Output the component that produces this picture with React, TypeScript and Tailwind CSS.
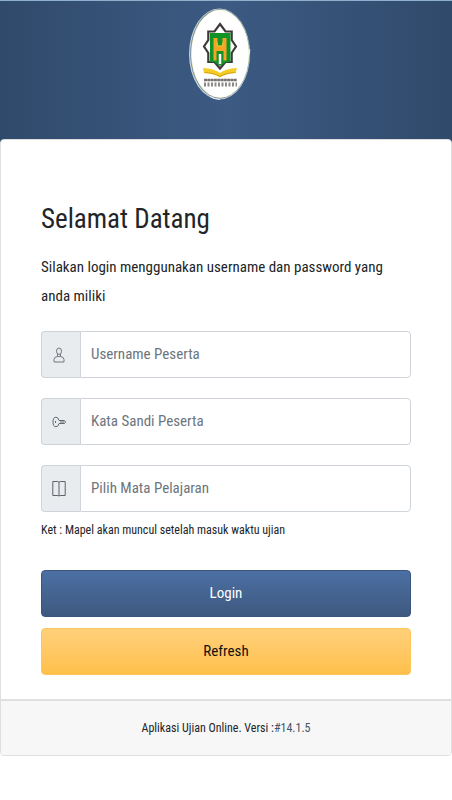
import { useState } from "react";
import type { FormEvent, ReactNode } from "react";

const SchoolLogo = () => (
  <svg
    viewBox="0 0 64 94"
    role="img"
    aria-label="Logo Purbalingga"
    className="h-[94px] w-16"
  >
    <ellipse cx="31.5" cy="46" rx="30.500" ry="45.500" fill="#c5d2dc" />
    <ellipse cx="31.8" cy="45.8" rx="29.600" ry="44.600" fill="#5d7896" />
    <ellipse cx="32" cy="45.8" rx="29.200" ry="44.200" fill="#d5d89c" />
    <ellipse cx="32.2" cy="45.8" rx="28.700" ry="43.700" fill="#fff" />
    <path
      d="M61.500 41q.5 3-.5 6M22 88.500q5 3 10 3"
      fill="none"
      stroke="#e4eaee"
      strokeWidth="1.2"
    />
    <path
      d="M32 16l5.500 7.500h6.200V32L48 38.500 43.700 45v9h-6.200L32 60.500 26.500 54h-6.200v-9L16 38.500l4.300-6.500v-8.500h6.200z"
      fill="#fff"
      stroke="#40393c"
      strokeWidth="2.2"
    />
    <path d="M22 25h20.500v29h-4L32 58l-6-4h-4z" fill="#119326" />
    <path d="M25.500 30h4v7.500h5V30h4v22.500h-3V43h-7v9.500h-3z" fill="#f6a428" />
    <path d="M28.500 34.500h1.500v3h4v-3h1.500v4h-7z" fill="#d8c32a" />
    <path d="M32 46v10" stroke="#fff" strokeWidth="2.500" />
    <path
      d="M15 60q11 .5 17 5 6-4.500 17-5l-1.500 5q-10 .5-15.500 4.500-5.500-4-16-4.500z"
      fill="#f5cb25"
    />
    <path
      d="M16.500 64.500q10 .5 15.500 4 5.500-3.500 15.500-4"
      fill="none"
      stroke="#c99b14"
      strokeWidth="0.8"
    />
    <path d="M16 72h33" stroke="#77726f" strokeWidth="2.500" strokeDasharray="3 .3" />
    <path d="M16 76.500h33" stroke="#8b8886" strokeWidth="4" strokeDasharray="2 1.500" />
  </svg>
);

const UserIcon = () => (
  <svg viewBox="0 0 12 16" className="h-4 w-3" fill="none" stroke="#73787e">
    <ellipse cx="6" cy="4.200" rx="2.500" ry="3.200" />
    <path d="M4.500 7v2.500Q1 10 1 12.500V15h10v-2.500q0-2.500-3.500-3V7" />
    <path d="M4.500 9.500h3" />
  </svg>
);

const KeyIcon = () => (
  <svg viewBox="0 0 14 12" className="h-3 w-3.5" fill="none" stroke="#646a71">
    <path d="M7 4.500Q6.200 1.200 4 1.200 1 1.200 1 6t3 4.800q2.200 0 3-3.300h5.500l1-1.500-1-1.500z" />
    <path d="M3.500 5v2M8 6h4" />
  </svg>
);

const BookIcon = () => (
  <svg viewBox="0 0 14 17" className="h-[17px] w-3.5" fill="none" stroke="#5d6268">
    <path d="M.8 15.500V1.500h5L7 2.300l1.200-.8h5v14h-5L7 16l-1.200-.5zM7 2v14" />
  </svg>
);

type FieldProps = {
  id: string;
  label: string;
  icon: ReactNode;
  children: ReactNode;
};

const Field = ({ id, label, icon, children }: FieldProps) => (
  <div className="flex h-[47px]">
    <label
      htmlFor={id}
      aria-label={label}
      className="flex w-[39px] shrink-0 items-center justify-center rounded-l border border-r-0 border-[#ced4da] bg-[#e9ecef] pr-1"
    >
      {icon}
    </label>
    {children}
  </div>
);

const controlClass =
  "w-full min-w-0 flex-1 appearance-none rounded-r border border-[#ced4da] bg-white px-2.5 text-[15px] text-[#6c757d] placeholder:text-[#6c757d] focus:border-[#3c5a86] focus:outline-none";

const App = () => {
  const [username, setUsername] = useState("");
  const [password, setPassword] = useState("");

  const handleSubmit = (event: FormEvent) => {
    event.preventDefault();
  };

  const handleRefresh = () => {
    setUsername("");
    setPassword("");
  };

  return (
    <div className="min-h-screen bg-white font-['Roboto_Condensed',Roboto,sans-serif] text-[#212529]">
      <header className="flex h-[226px] justify-center border-t border-[#8fb0cc] bg-[linear-gradient(90deg,#304a6b,#3c5a82_50%,#304a6b)] pt-[7px] pr-3">
        <SchoolLogo />
      </header>

      <main className="relative -mt-[87px]">
        <div className="overflow-hidden rounded border border-[#dfdfdf] bg-white">
          <form onSubmit={handleSubmit} className="px-10 pt-[59px] pb-6">
            <h1 className="text-[27px] leading-10">Selamat Datang</h1>
            <p className="mt-3.5 mb-5 text-[15px] leading-[29px]">
              Silakan login menggunakan username dan password yang anda miliki
            </p>

            <div className="flex flex-col gap-5">
              <Field id="username" label="Username" icon={<UserIcon />}>
                <input
                  id="username"
                  type="text"
                  placeholder="Username Peserta"
                  value={username}
                  onChange={(e) => setUsername(e.target.value)}
                  className={controlClass}
                />
              </Field>

              <Field id="password" label="Kata Sandi" icon={<KeyIcon />}>
                <input
                  id="password"
                  type="password"
                  placeholder="Kata Sandi Peserta"
                  value={password}
                  onChange={(e) => setPassword(e.target.value)}
                  className={controlClass}
                />
              </Field>

              <Field id="mapel" label="Mata Pelajaran" icon={<BookIcon />}>
                <select id="mapel" className={controlClass}>
                  <option value="">Pilih Mata Pelajaran</option>
                </select>
              </Field>
            </div>
            <p className="mt-2 text-xs leading-5">
              Ket : Mapel akan muncul setelah masuk waktu ujian
            </p>

            {/* Actions */}
            <div className="mt-[30px] flex flex-col gap-[11px]">
              <button
                type="submit"
                className="h-[47px] rounded border border-[#3a5680] bg-linear-to-b from-[#4c70a4] to-[#3d597f] text-[15px] text-white"
              >
                Login
              </button>
              <button
                type="button"
                onClick={handleRefresh}
                className="h-[47px] rounded border border-[#fbc65c] bg-linear-to-b from-[#ffd07a] to-[#ffc04a] text-[15px] text-[#111]"
              >
                Refresh
              </button>
            </div>
          </form>

          <footer className="border-t-2 border-[#dfdfdf] bg-[#f7f7f7] py-[17px] text-center text-xs leading-5">
            Aplikasi Ujian Online. Versi :
            <span className="text-[#44546a]">#14.1.5</span>
          </footer>
        </div>
      </main>
    </div>
  );
};

export default App;
